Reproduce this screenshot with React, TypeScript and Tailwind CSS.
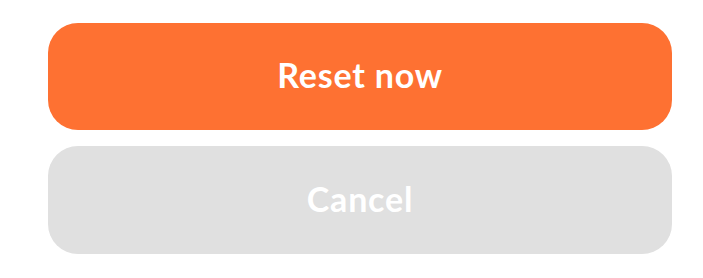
export default function App() {
    return (
        <div className="w-[703px] h-[278px] bg-white flex flex-col gap-4 pl-12 pr-[31px] pt-[23px]" style={{ fontFamily: 'Lato, "Noto Sans", sans-serif' }}>
            <button className="h-[107px] w-full rounded-[30px] bg-[#fe7132] text-white text-[34px] font-bold tracking-[0.8px] flex items-center justify-center pb-1">
                Reset now
            </button>
            <button className="h-[108px] w-full rounded-[30px] bg-[#e0e0e0] text-white text-[34px] font-bold tracking-[0.8px] flex items-center justify-center pb-1">
                Cancel
            </button>
        </div>
    )
}
